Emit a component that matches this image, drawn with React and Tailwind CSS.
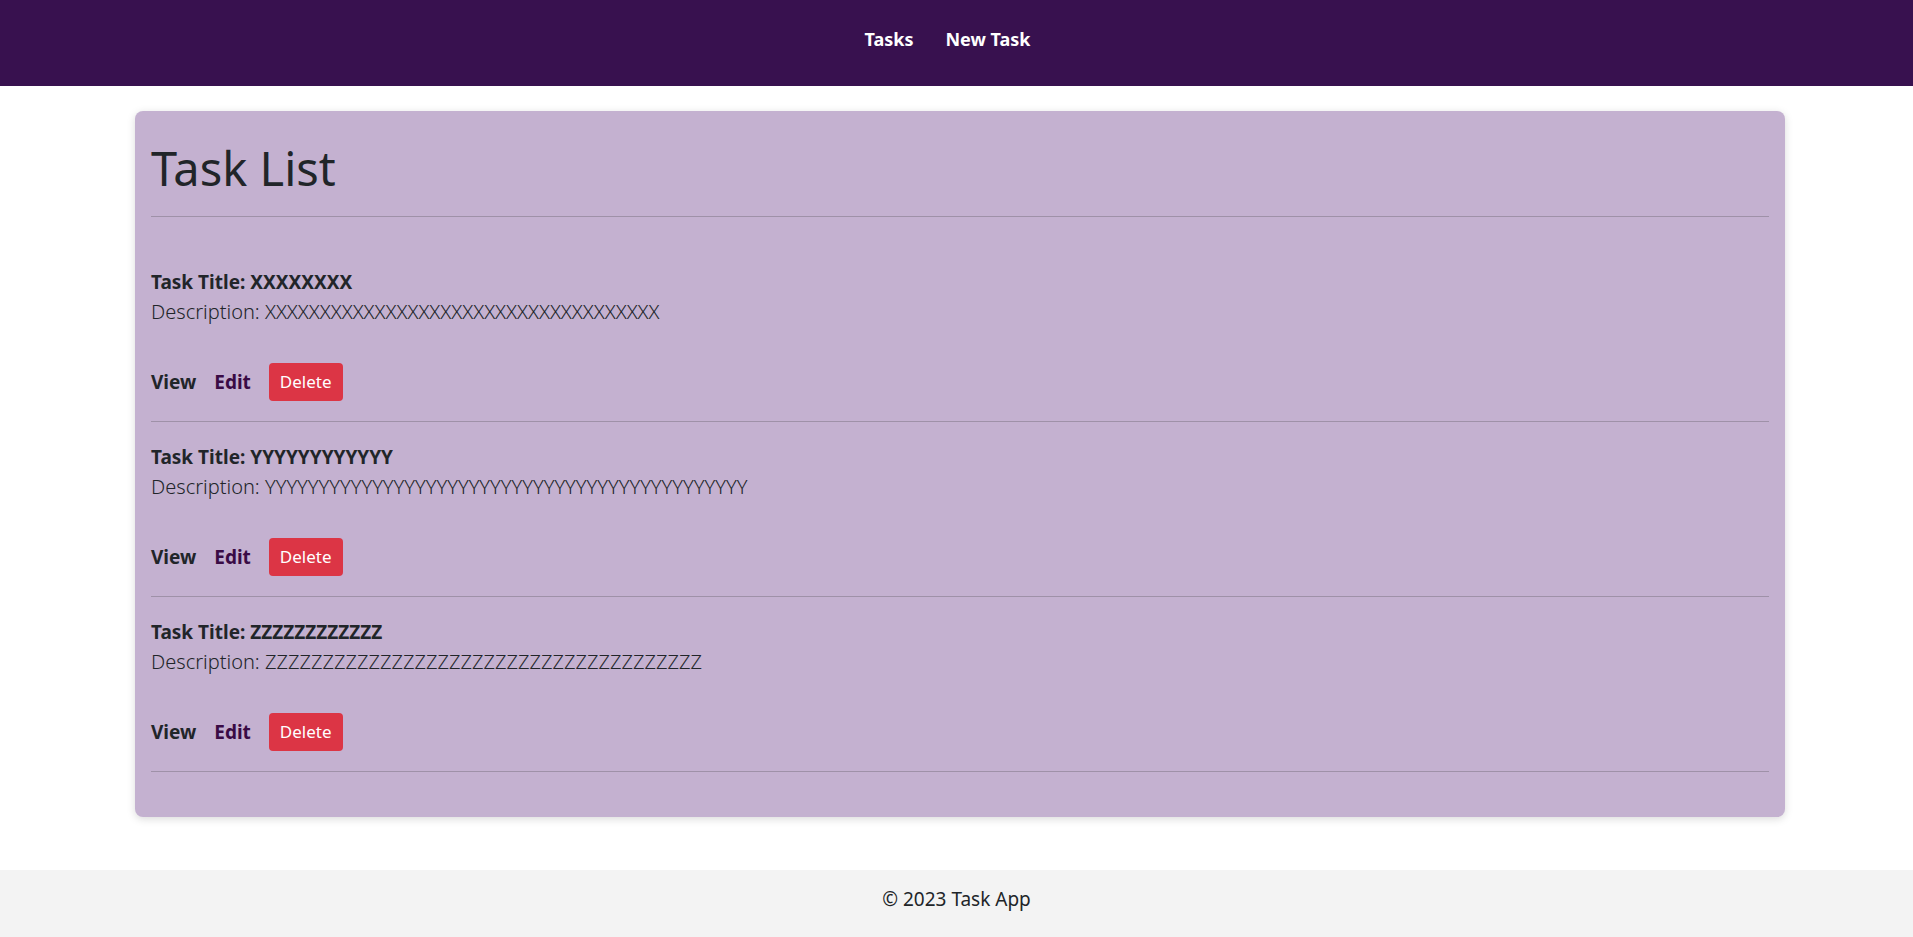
import React from 'react';

const tasks = [
  { id: 1, title: 'XXXXXXXX', description: 'X'.repeat(36) },
  { id: 2, title: 'YYYYYYYYYYYY', description: 'Y'.repeat(45) },
  { id: 3, title: 'ZZZZZZZZZZZZ', description: 'Z'.repeat(38) },
];

function TaskItem({ task }) {
  return (
    <li className="pt-[23px] pb-[20px] border-b border-[#9f91a8]">
      <h5 className="text-[19px] leading-[24px] font-bold text-[#212529]">Task Title: {task.title}</h5>
      <p className="mt-[3px] text-[20px] leading-[30px] font-light text-[#212529]">Description: {task.description}</p>
      <div className="mt-[36px] flex items-center h-[38px]">
        <a href="#" className="mr-[18px] text-[19px] font-bold text-[#212529]">View</a>
        <a href="#" className="mr-[18px] text-[19px] font-bold text-[#3a0b45]">Edit</a>
        <button className="h-[38px] px-[11px] rounded-[4px] bg-[#dc3545] text-white text-[17px]">Delete</button>
      </div>
    </li>
  );
}

export default function App() {
  return (
    <div className="min-h-screen flex flex-col bg-white font-['Noto_Sans',sans-serif] text-[#212529]">
      <header className="h-[86px] bg-[#38114f] flex justify-center">
        <nav className="flex gap-[32px] pt-[27px] pr-[18px]">
          <a href="#" className="text-[18px] leading-[24px] font-bold text-white">Tasks</a>
          <a href="#" className="text-[18px] leading-[24px] font-bold text-white">New Task</a>
        </nav>
      </header>

      <main className="flex-1 pl-[135px] pr-[128px] pt-[25px] pb-[53px]">
        <div className="bg-[#c4b1d0] rounded-lg shadow-[0_2px_8px_rgba(0,0,0,0.15)] px-4 pt-[26px] pb-[45px]">
          <h1 className="text-[47px] leading-[62px] font-normal text-[#212529] mb-[17px]">Task List</h1>
          <hr className="border-t border-[#9f91a8]" />
          <ul className="mt-[30px]">
            {tasks.map((t) => (
              <TaskItem key={t.id} task={t} />
            ))}
          </ul>
        </div>
      </main>

      <footer className="h-[67px] bg-[#f3f3f3] flex items-center justify-center pb-2">
        <p className="text-[19px] text-[#212529]">© 2023 Task App</p>
      </footer>
    </div>
  );
}
